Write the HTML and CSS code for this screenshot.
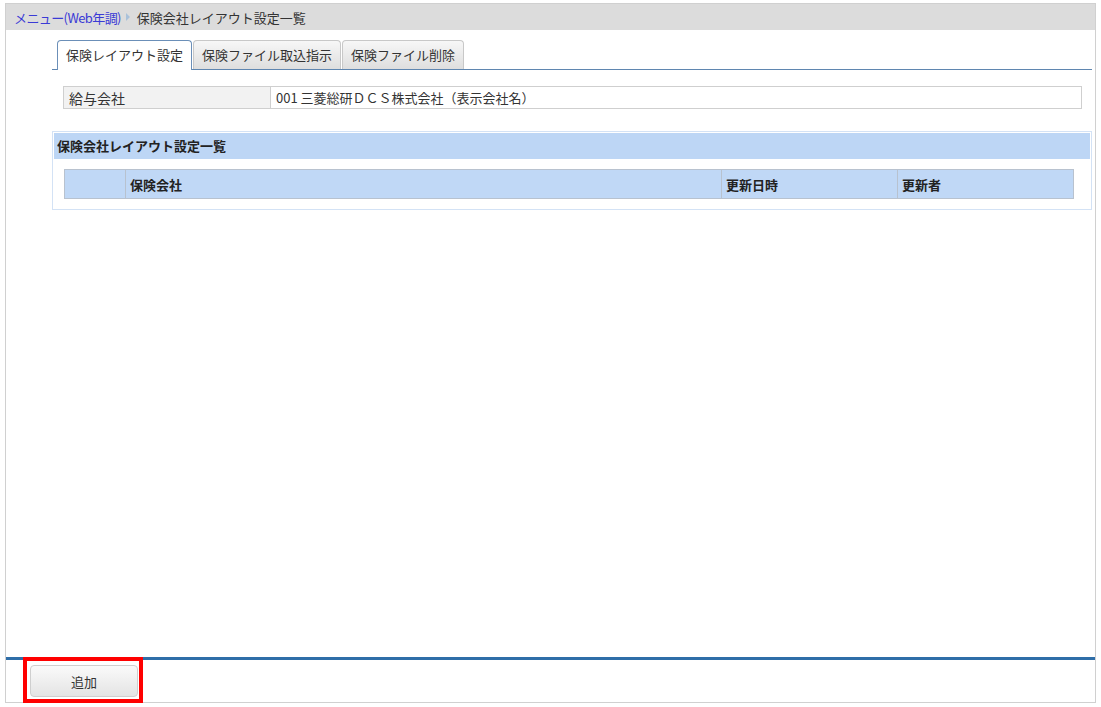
FILE: index.html
```html
<!DOCTYPE html>
<html lang="ja">
<head>
    <meta charset="UTF-8">
    <title>保険会社レイアウト設定一覧</title>
    <link rel="stylesheet" href="styles.css">
</head>
<body>
    <div class="frame">
        <div class="breadcrumb">
            <a href="#" class="crumb-link">メニュー(Web年調)</a>
            <span class="crumb-arrow"></span>
            <span class="crumb-current">保険会社レイアウト設定一覧</span>
        </div>
        <div class="content">
            <ul class="tabs">
                <li class="tab active">保険レイアウト設定</li>
                <li class="tab">保険ファイル取込指示</li>
                <li class="tab">保険ファイル削除</li>
            </ul>
            <table class="info">
                <tr>
                    <th>給与会社</th>
                    <td>001 三菱総研ＤＣＳ株式会社（表示会社名）</td>
                </tr>
            </table>
            <div class="panel">
                <div class="panel-title">保険会社レイアウト設定一覧</div>
                <table class="list">
                    <tr>
                        <th class="col-no"></th>
                        <th class="col-name">保険会社</th>
                        <th class="col-date">更新日時</th>
                        <th class="col-user">更新者</th>
                    </tr>
                </table>
            </div>
        </div>
        <div class="footer">
            <button class="btn">追加</button>
            <div class="highlight"></div>
        </div>
    </div>
</body>
</html>
```

FILE: styles.css
```css
body {
    margin: 0;
    background-color: #fff;
    font-family: "Noto Sans CJK JP", "Noto Sans", sans-serif;
    font-size: 13px;
    color: #333;
}
.frame {
    margin: 3px 5px 0 5px;
    height: 698px;
    border: 1px solid #d0d0d0;
    display: flex;
    flex-direction: column;
}
.breadcrumb {
    height: 26px;
    background-color: #dcdcdc;
    display: flex;
    align-items: center;
    padding-left: 8px;
    font-size: 13px;
}
.crumb-link {
    color: #3a3ad6;
    text-decoration: none;
    letter-spacing: -0.6px;
}
.crumb-arrow {
    width: 0;
    height: 0;
    border-top: 4px solid transparent;
    border-bottom: 4px solid transparent;
    border-left: 4px solid #a9c1da;
    margin: 0 7px 0 5px;
}
.crumb-current {
    color: #333;
}
.content {
    flex: 1;
    margin: 0 3px 0 46px;
}
.tabs {
    list-style: none;
    margin: 10px 0 0 0;
    padding: 0 0 0 5px;
    display: flex;
    gap: 1px;
    border-bottom: 1px solid #5f86b0;
}
.tab {
    height: 28px;
    line-height: 28px;
    padding: 0 8px;
    border: 1px solid #c8c8c8;
    border-bottom: none;
    border-radius: 4px 4px 0 0;
    background: linear-gradient(#f7f7f7, #dedede);
    color: #333;
    font-size: 13px;
}
.tab.active {
    background: #fff;
    border-color: #6b8fb8;
    height: 29px;
    margin-bottom: -1px;
}
.info {
    margin: 16px 10px 0 11px;
    width: calc(100% - 21px);
    border-collapse: collapse;
}
.info th,
.info td {
    border: 1px solid #cfcfcf;
    height: 21px;
    padding: 0 5px;
    text-align: left;
    font-weight: normal;
}
.info th {
    width: 196px;
    background-color: #f2f2f2;
    font-size: 14px;
}
.info td {
    font-size: 13px;
}
.panel {
    margin-top: 22px;
    border: 1px solid #d3e2f5;
    padding: 1px;
}
.panel-title {
    height: 26px;
    line-height: 26px;
    background-color: #bdd6f5;
    padding-left: 3px;
    font-weight: bold;
    color: #222;
}
.list {
    margin: 10px 16px 9px 10px;
    width: calc(100% - 26px);
    border-collapse: collapse;
}
.list th {
    height: 28px;
    background-color: #c0d8f6;
    border: 1px solid #b8c2cf;
    text-align: left;
    padding: 0 4px;
    font-weight: bold;
    color: #222;
}
.list .col-no {
    width: 52px;
}
.list .col-date,
.list .col-user {
    width: 167px;
}
.footer {
    position: relative;
    border-top: 3px solid #2f6ea8;
    padding: 5px 0 0 24px;
    box-sizing: border-box;
    height: 45px;
}
.btn {
    width: 108px;
    height: 32px;
    border: 1px solid #cfcfcf;
    border-radius: 4px;
    background: linear-gradient(#fafafa, #e4e4e4);
    font-family: "Noto Sans CJK JP", sans-serif;
    font-size: 13px;
    color: #333;
}
.highlight {
    position: absolute;
    left: 17px;
    top: -3px;
    width: 112px;
    height: 38px;
    border: 4px solid #f00;
}
```
